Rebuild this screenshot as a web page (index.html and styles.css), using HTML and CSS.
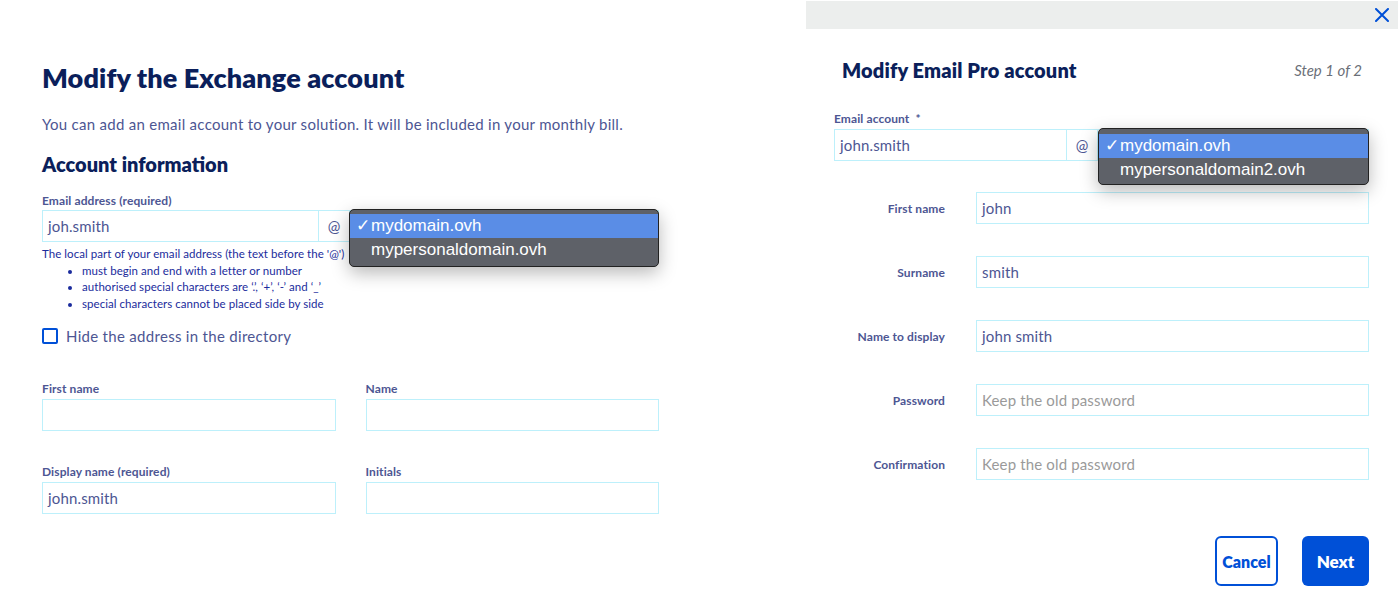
FILE: index.html
```html
<!DOCTYPE html>
<html lang="en">
<head>
<meta charset="utf-8">
<title>Modify accounts</title>
<link rel="stylesheet" href="styles.css">
</head>
<body>
<main class="page">
  <section class="exchange">
    <h1 class="ex-title">Modify the Exchange account</h1>
    <p class="ex-intro">You can add an email account to your solution. It will be included in your monthly bill.</p>
    <h2 class="ex-subtitle">Account information</h2>

    <label class="field-label">Email address (required)</label>
    <div class="email-row">
      <div class="input ex-local">joh.smith</div>
      <div class="input at">@</div>
      <div class="input ex-domain"></div>
      <div class="menu menu-left">
        <div class="menu-item selected"><span class="check">✓</span>mydomain.ovh</div>
        <div class="menu-item"><span class="check"></span>mypersonaldomain.ovh</div>
      </div>
    </div>
    <div class="help">
      <p>The local part of your email address (the text before the '@')</p>
      <ul>
        <li>must begin and end with a letter or number</li>
        <li>authorised special characters are ‘.’, ‘+’, ‘-’ and ‘_’</li>
        <li>special characters cannot be placed side by side</li>
      </ul>
    </div>

    <div class="check-row">
      <span class="checkbox"></span>
      <span class="check-label">Hide the address in the directory</span>
    </div>

    <div class="grid">
      <div class="cell">
        <label class="field-label">First name</label>
        <div class="input"></div>
      </div>
      <div class="cell">
        <label class="field-label">Name</label>
        <div class="input"></div>
      </div>
      <div class="cell">
        <label class="field-label">Display name (required)</label>
        <div class="input">john.smith</div>
      </div>
      <div class="cell">
        <label class="field-label">Initials</label>
        <div class="input"></div>
      </div>
    </div>
  </section>

  <section class="pro">
    <div class="pro-bar">
      <svg class="close" width="14" height="14" viewBox="0 0 14 14"><path d="M1 1 L13 13 M13 1 L1 13" stroke="#0050d7" stroke-width="2" stroke-linecap="round"/></svg>
    </div>
    <div class="pro-head">
      <h1 class="pro-title">Modify Email Pro account</h1>
      <span class="step">Step 1 of 2</span>
    </div>
    <div class="pro-form">
      <label class="field-label">Email account &nbsp;*</label>
      <div class="email-row">
        <div class="input pro-local">john.smith</div>
        <div class="input at">@</div>
        <div class="input ex-domain"></div>
        <div class="menu menu-right">
          <div class="menu-item selected"><span class="check">✓</span>mydomain.ovh</div>
          <div class="menu-item"><span class="check"></span>mypersonaldomain2.ovh</div>
        </div>
      </div>

      <div class="rows">
        <div class="row"><label class="row-label">First name</label><div class="input">john</div></div>
        <div class="row"><label class="row-label">Surname</label><div class="input">smith</div></div>
        <div class="row"><label class="row-label">Name to display</label><div class="input">john smith</div></div>
        <div class="row"><label class="row-label">Password</label><div class="input placeholder">Keep the old password</div></div>
        <div class="row"><label class="row-label">Confirmation</label><div class="input placeholder">Keep the old password</div></div>
      </div>

      <div class="actions">
        <button class="btn btn-ghost">Cancel</button>
        <button class="btn btn-primary">Next</button>
      </div>
    </div>
  </section>
</main>
</body>
</html>
```

FILE: styles.css
```css
* { box-sizing: border-box; }
html, body { margin: 0; padding: 0; background: #fff; }
body {
  font-family: "Lato", "Noto Sans", sans-serif;
  color: #4d5693;
}
.page {
  display: flex;
  width: 1400px;
  height: 607px;
}

/* ---------- left: Exchange ---------- */
.exchange {
  width: 806px;
  padding: 62px 0 0 42px;
}
.exchange > * { width: 617px; }
.ex-title {
  margin: 0;
  font-size: 27px;
  line-height: 32px;
  font-weight: 800;
  letter-spacing: 0.12px;
  color: #0b1f5b;
}
.ex-intro {
  margin: 20px 0 0;
  font-size: 15px;
  line-height: 20px;
  letter-spacing: 0.28px;
}
.ex-subtitle {
  margin: 18px 0 0;
  font-size: 20px;
  line-height: 24px;
  font-weight: 800;
  color: #0b1f5b;
}
.field-label {
  display: block;
  font-size: 12px;
  line-height: 14px;
  font-weight: 700;
  letter-spacing: 0.1px;
  color: #4d5693;
}
.exchange > .field-label { margin-top: 18px; }

.email-row {
  position: relative;
  display: flex;
  margin-top: 2px;
  height: 32px;
}
.input {
  height: 32px;
  border: 1px solid #bdf0fb;
  padding: 0 5px;
  font-size: 15px;
  line-height: 30px;
  letter-spacing: 0.15px;
  color: #4d5693;
  background: #fff;
}
.input.placeholder { color: #9a9a9a; }
.ex-local { width: 277px; }
.at { width: 31px; border-left: 0; text-align: center; padding: 0; }
.ex-domain { flex: 1; border-left: 0; }

.menu {
  position: absolute;
  top: -1px;
  background: #5e6168;
  border: 1px solid #222;
  border-radius: 5px;
  padding: 4px 0;
  box-shadow: 0 6px 18px rgba(0,0,0,0.28);
  font-family: "Liberation Sans", Arial, sans-serif;
  font-size: 17px;
  color: #fff;
  z-index: 2;
}
.menu-left { left: 307px; width: 310px; height: 58px; }
.menu-right { left: 264px; width: 271px; height: 57px; padding-top: 5px; }
.menu-item {
  height: 24px;
  line-height: 24px;
  padding-left: 6px;
  display: flex;
  white-space: nowrap;
}
.menu-item.selected { background: #5a8de6; }
.check { display: inline-block; width: 15px; }

.help {
  margin-top: 4px;
  font-size: 11.5px;
  line-height: 16.5px;
  letter-spacing: 0.05px;
  color: #1a2b9c;
}
.help p { margin: 0; }
.help ul {
  margin: 0;
  padding-left: 40px;
}

.check-row {
  display: flex;
  align-items: center;
  margin-top: 16px;
  height: 16px;
}
.checkbox {
  width: 16px;
  height: 16px;
  border: 2px solid #0050d7;
  border-radius: 2px;
  margin-right: 8px;
}
.check-label { font-size: 15px; letter-spacing: 0.3px; }

.grid {
  display: grid;
  grid-template-columns: 1fr 1fr;
  column-gap: 30px;
  row-gap: 34px;
  margin-top: 38px;
}
.cell .input { margin-top: 3px; }

/* ---------- right: Email Pro ---------- */
.pro {
  width: 592px;
  padding-top: 1px;
}
.pro-bar {
  height: 28px;
  background: #eceeed;
  display: flex;
  justify-content: flex-end;
  align-items: center;
  padding-right: 9px;
}
.pro-head {
  display: flex;
  justify-content: space-between;
  align-items: center;
  padding: 0 36px;
  margin-top: 29px;
  height: 24px;
}
.pro-title {
  margin: 0;
  font-size: 20px;
  line-height: 24px;
  font-weight: 800;
  letter-spacing: 0.15px;
  color: #0b1f5b;
}
.step {
  font-size: 15px;
  font-style: italic;
  color: #6b6f78;
}
.pro-form {
  padding: 0 29px 0 28px;
  margin-top: 30px;
}
.pro-form .email-row { margin-top: 3px; }
.pro-local { width: 233px; }

.rows {
  display: flex;
  flex-direction: column;
  gap: 32px;
  margin-top: 31px;
}
.row {
  display: flex;
  align-items: center;
}
.row-label {
  width: 111px;
  text-align: right;
  font-size: 12px;
  font-weight: 700;
  letter-spacing: 0.1px;
  color: #4d5693;
  margin-right: 31px;
}
.row .input { flex: 1; }

.actions {
  display: flex;
  justify-content: flex-end;
  gap: 24px;
  margin-top: 56px;
}
.btn {
  height: 50px;
  font-family: inherit;
  font-size: 16px;
  font-weight: 800;
  border-radius: 6px;
  padding: 0;
  cursor: pointer;
}
.btn-ghost {
  width: 63px;
  background: #fff;
  border: 2px solid #0050d7;
  color: #0050d7;
}
.btn-primary {
  width: 67px;
  background: #0050d7;
  border: 0;
  color: #fff;
  font-size: 17px;
}
```
